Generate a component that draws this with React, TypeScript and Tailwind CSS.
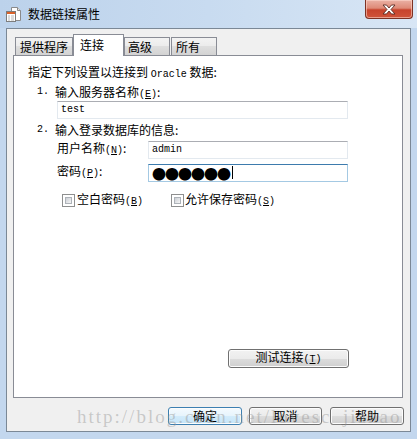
import React from "react";

const CN = "font-['Noto_Sans_CJK_SC','Noto_Sans_CJK_JP',sans-serif]";
const MONO = "font-['Liberation_Mono','DejaVu_Sans_Mono',monospace] text-[10px]";

function Key({ k }: { k: string }) {
  return (
    <span className={MONO}>
      (<span className="underline underline-offset-1">{k}</span>)
    </span>
  );
}

function FormIcon() {
  return (
    <svg width="15" height="15" viewBox="0 0 15 15" className="shrink-0">
      <path d="M5.5 0.5h6l3 3v10h-9z" fill="#fff" stroke="#8a8a8a" />
      <path d="M11.5 0.5v3h3" fill="#e4e4e4" stroke="#8a8a8a" />
      <rect x="0.5" y="4.5" width="9" height="10" fill="#fff" stroke="#7d7d7d" />
      <rect x="1" y="5" width="8" height="2" fill="#d9622b" />
      <rect x="2" y="8.5" width="2" height="1" fill="#b9b9b9" />
      <rect x="5" y="8.5" width="3" height="1" fill="#b9b9b9" />
      <rect x="2" y="10.5" width="2" height="1" fill="#b9b9b9" />
      <rect x="5" y="10.5" width="3" height="1" fill="#b9b9b9" />
      <rect x="2" y="12.5" width="2" height="1" fill="#b9b9b9" />
      <rect x="5" y="12.5" width="3" height="1" fill="#b9b9b9" />
    </svg>
  );
}

function CloseButton() {
  return (
    <div className="absolute right-[4px] top-0 flex h-[19px] w-[48px] items-center justify-center rounded-b-[4px] border border-t-0 border-[#7d3224] bg-[linear-gradient(#eab1a5_0%,#de8a77_45%,#c7432c_55%,#d0543a_100%)] shadow-[inset_0_0_0_1px_rgba(255,220,210,0.55)]">
      <svg width="16" height="11" viewBox="0 0 16 11">
        <path
          d="M2 1h3.5L8 4l2.5-3H14l-4 4.5L14 10h-3.5L8 7l-2.5 3H2l4-4.5z"
          fill="#fff"
          stroke="#5a2a22"
          strokeWidth="0.9"
          strokeLinejoin="round"
        />
      </svg>
    </div>
  );
}

function Checkbox() {
  return (
    <div className="h-[13px] w-[13px] shrink-0 border border-[#8e8f8f] bg-white p-[2px]">
      <div className="h-full w-full border border-[#aeb3b9] bg-[linear-gradient(135deg,#cbcfd5,#f6f6f6)]" />
    </div>
  );
}

function Btn({ children, primary, className }: { children: React.ReactNode; primary?: boolean; className?: string }) {
  return (
    <div
      className={
        "flex items-center justify-center rounded-[3px] border shadow-[inset_0_0_0_1px_#fcfcfc] " +
        (primary
          ? "border-[#3c7fb1] bg-[linear-gradient(#f4fafe_0%,#e6f4fc_50%,#d3ecfb_50%,#c4e4f8_100%)] "
          : "border-[#707070] bg-[linear-gradient(#f2f2f2_0%,#ebebeb_50%,#dddddd_50%,#cfcfcf_100%)] ") +
        (className ?? "")
      }
    >
      {children}
    </div>
  );
}

function Tab({ label, selected, className }: { label: string; selected?: boolean; className: string }) {
  if (selected) {
    return (
      <div className={"relative z-10 -mb-px flex h-[22px] items-start border border-b-0 border-[#898c95] bg-white pt-[2px] " + className}>
        {label}
      </div>
    );
  }
  return (
    <div className={"flex h-[18px] items-center border border-b-0 border-[#898c95] bg-[linear-gradient(#f3f3f3_0%,#ebebeb_50%,#dedede_50%,#d3d3d3_100%)] " + className}>
      {label}
    </div>
  );
}

export default function App() {
  return (
    <div className={`relative h-[439px] w-[417px] overflow-hidden bg-[#c3d7ee] text-[12px] leading-4 text-black ${CN}`}>
      {/* title bar */}
      <div className="flex h-[28px] items-center bg-[linear-gradient(90deg,#bcd2eb_0%,#c8dbf0_50%,#d8e6f5_100%)] pl-[6px]">
        <FormIcon />
        <span className="ml-[7px]">数据链接属性</span>
      </div>
      <CloseButton />

      {/* client area */}
      <div className="ml-[6px] flex h-[404px] w-[405px] flex-col border border-[#7b8896] bg-[#f0f0f0]">
        <div className="mt-[5px] flex h-[21px] items-end pl-[8px]">
          <Tab label="提供程序" className="w-[58px] pl-[4px]" />
          <Tab label="连接" selected className="w-[51px] pl-[6px]" />
          <Tab label="高级" className="w-[46px] pl-[3px]" />
          <Tab label="所有" className="ml-px w-[46px] pl-[4px]" />
        </div>

        <div className="ml-[6px] flex h-[343px] w-[390px] flex-col border border-[#898c95] bg-white">
          <div className="ml-[14px] mt-[8px] h-4">
            指定下列设置以连接到 <span className={MONO}>Oracle</span> 数据:
          </div>

          <div className="ml-[23px] mt-[4px] flex h-4">
            <span className={"w-[18px] " + MONO}>1.</span>
            <span>
              输入服务器名称<Key k="E" />:
            </span>
          </div>
          <div className="ml-[43px] mt-[1px] flex h-[18px] w-[291px] items-center border border-[#e3e9ef] border-t-[#abadb3] pl-[3px]">
            <span className={MONO}>test</span>
          </div>

          <div className="ml-[23px] mt-[3px] flex h-4">
            <span className={"w-[18px] " + MONO}>2.</span>
            <span>输入登录数据库的信息:</span>
          </div>

          <div className="ml-[43px] mt-[2px] flex items-center">
            <span className="w-[91px]">
              用户名称<Key k="N" />:
            </span>
            <div className="flex h-[18px] w-[200px] items-center border border-[#e3e9ef] border-t-[#abadb3] pl-[3px]">
              <span className={MONO}>admin</span>
            </div>
          </div>

          <div className="ml-[43px] mt-[4px] flex items-center">
            <span className="w-[91px]">
              密码<Key k="P" />:
            </span>
            <div className="flex h-[18px] w-[200px] items-center border border-[#a4c9e3] border-t-[#3d7bad] pl-[3px]">
              <span className="text-[14px] leading-none tracking-[-1px]">●●●●●●</span>
              <span className="ml-[2px] h-[13px] w-px bg-black" />
            </div>
          </div>

          <div className="ml-[48px] mt-[10px] flex h-4 items-center">
            <div className="flex w-[109px] items-center gap-[2px]">
              <Checkbox />
              <span>
                空白密码<Key k="B" />
              </span>
            </div>
            <div className="flex items-center gap-[1px]">
              <Checkbox />
              <span>
                允许保存密码<Key k="S" />
              </span>
            </div>
          </div>

          <div className="flex-1" />
          <Btn className="mb-[29px] ml-[214px] h-[19px] w-[121px]">
            <span>
              测试连接<Key k="T" />
            </span>
          </Btn>
        </div>

        <div className="mt-[9px] flex h-[18px] pl-[161px]">
          <Btn primary className="w-[74px]">确定</Btn>
          <Btn className="ml-[7px] w-[73px]">取消</Btn>
          <Btn className="ml-[8px] w-[74px]">帮助</Btn>
        </div>
      </div>

      {/* watermark */}
      <div className="pointer-events-none absolute left-[77px] top-[407px] font-['Liberation_Serif',serif] text-[19px] leading-none tracking-[2px] text-[rgba(150,150,150,0.45)]">
        http://blog.csdn.net/lovesc_jiahao
      </div>
    </div>
  );
}
